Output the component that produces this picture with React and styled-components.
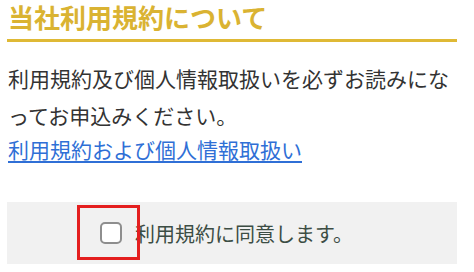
import React from 'react'
import styled, { createGlobalStyle } from 'styled-components'

const GlobalStyle = createGlobalStyle`
  html, body {
    margin: 0;
    padding: 0;
    background: #ffffff;
  }
  body {
    font-family: "Noto Sans CJK JP", "Noto Sans", sans-serif;
  }
`

const Page = styled.div`
  width: 450px;
  padding: 0 0 0 7px;
`

const Title = styled.h2`
  margin: 0;
  padding: 0 0 5px 1px;
  font-size: 26px;
  font-weight: 700;
  line-height: 34px;
  color: #dab332;
  border-bottom: 3px solid #dfb935;
  box-sizing: border-box;
  height: 42px;
`

const Body = styled.p`
  margin: 18px 0 0;
  padding-left: 1px;
  font-size: 21px;
  line-height: 37px;
  color: #333333;
`

const TermsLink = styled.a`
  display: block;
  padding-left: 1px;
  font-size: 21px;
  line-height: 30px;
  color: #2f6fd6;
  text-decoration: underline;
  text-underline-offset: 3px;
`

const AgreeBox = styled.label`
  position: relative;
  display: flex;
  align-items: center;
  gap: 13px;
  height: 62px;
  margin-top: 38px;
  padding-left: 93px;
  background: #f1f1f1;
  font-size: 20px;
  color: #3c4d44;
  cursor: pointer;
`

const Check = styled.span`
  display: block;
  width: 18px;
  height: 18px;
  border: 2px solid #8e8e8e;
  border-radius: 5px;
  background: #ffffff;
`

const Highlight = styled.span`
  position: absolute;
  left: 70px;
  top: 3px;
  width: 57px;
  height: 49px;
  border: 3px solid #e41f1f;
  pointer-events: none;
`

export default function App() {
  return (
    <>
      <GlobalStyle />
      <Page>
        <Title>当社利用規約について</Title>
        <Body>利用規約及び個人情報取扱いを必ずお読みになってお申込みください。</Body>
        <TermsLink href="#">利用規約および個人情報取扱い</TermsLink>
        <AgreeBox>
          <Check />
          <span>利用規約に同意します。</span>
          <Highlight />
        </AgreeBox>
      </Page>
    </>
  )
}
